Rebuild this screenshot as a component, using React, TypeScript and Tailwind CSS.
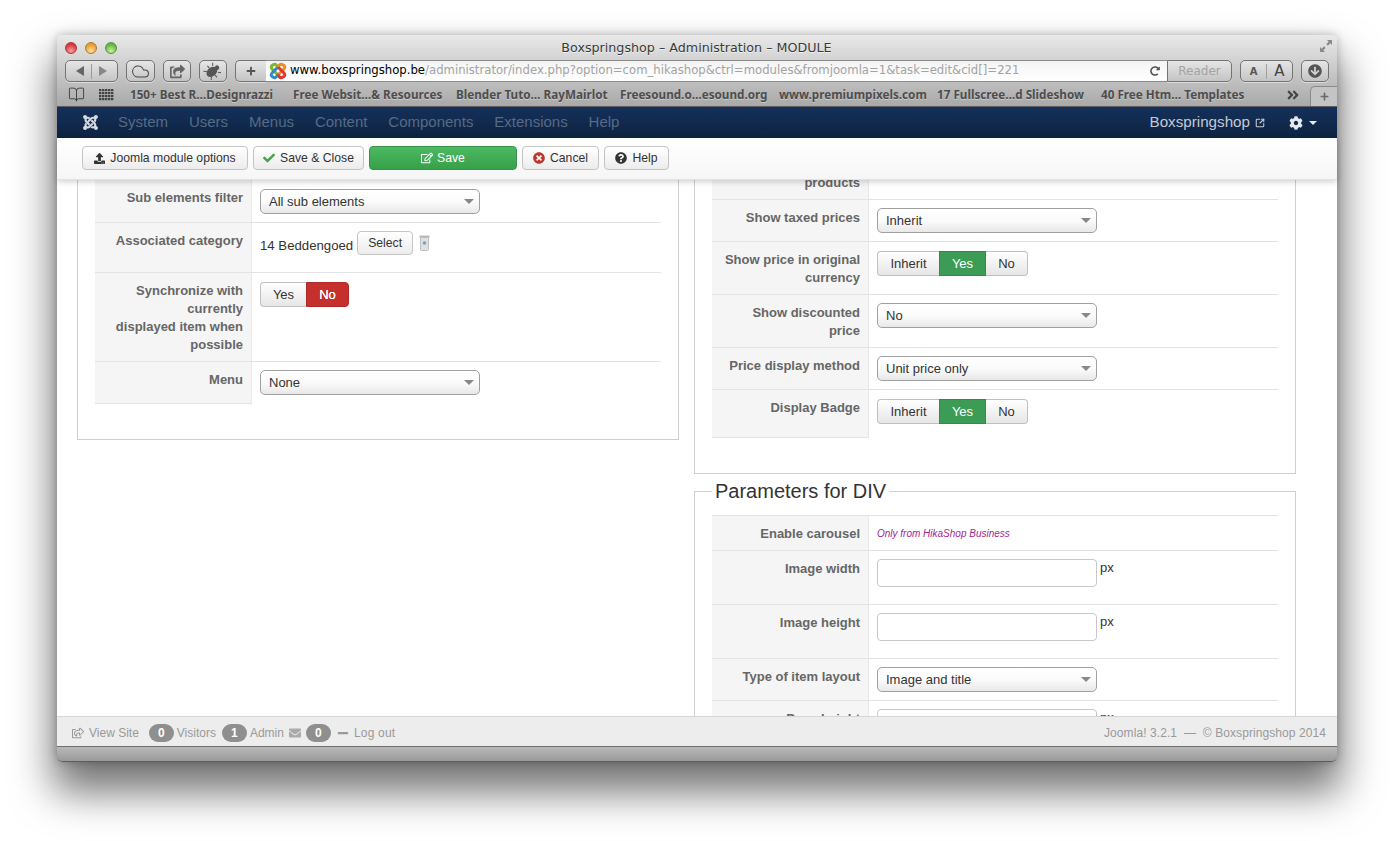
import type { ReactNode } from "react";
import {
  FaAngleDoubleRight, FaArrowCircleDown, FaCheck, FaCog, FaEnvelope, FaJoomla, FaMinus, FaPlus, FaQuestionCircle, FaRedoAlt,
  FaRegEdit, FaRegShareSquare, FaShareSquare, FaTimesCircle, FaUpload,
} from "react-icons/fa";
import { BookOpen, Cloud, SquareArrowOutUpRight } from "lucide-react";

const BOOKMARKS = [
  { t: "150+ Best R…Designrazzi", w: "w-[163px]" },
  { t: "Free Websit…& Resources", w: "w-[163px]" },
  { t: "Blender Tuto… RayMairlot", w: "w-[164px]" },
  { t: "Freesound.o…esound.org", w: "w-[159px]" },
  { t: "www.premiumpixels.com", w: "w-[158px]" },
  { t: "17 Fullscree…d Slideshow", w: "w-[164px]" },
  { t: "40 Free Htm… Templates", w: "w-[185px]" },
];
const NAV = ["System", "Users", "Menus", "Content", "Components", "Extensions", "Help"];

const chromeBtn = "h-[22px] flex items-center justify-center rounded-[5px] border border-[#747474] bg-gradient-to-b from-[#e6e6e6] to-[#c4c4c4] text-[#555] shadow-[0_1px_0_rgba(255,255,255,0.45)]";
const jBtn = "h-6 flex items-center justify-center gap-[5px] rounded-[4px] border border-[#c4c4c4] bg-gradient-to-b from-white to-[#ececec] text-[12.2px] text-[#333]";

function Caret() {
  return <span className="w-0 h-0 border-x-[5px] border-x-transparent border-t-[5px] border-t-[#888]" />;
}

function Select({ value }: { value: string }) {
  return (
    <div className="w-[220px] h-[25px] flex items-center justify-between pl-2 pr-[5px] rounded-[5px] border border-[#a0a0a0] bg-gradient-to-b from-white via-[#fbfbfb] to-[#e8e8e8] text-[13px] text-[#333]">
      {value}
      <Caret />
    </div>
  );
}

function Toggle({ inherit, yes, red }: { inherit?: boolean; yes?: boolean; red?: boolean }) {
  const off = "h-[25px] flex items-center justify-center border border-[#c0c0c0] bg-gradient-to-b from-white to-[#e6e6e6] text-[13px] text-[#333]";
  return (
    <div className="flex">
      {inherit && <div className={`${off} w-[62px] rounded-l-[4px] border-r-0`}>Inherit</div>}
      {yes ? (
        <div className="h-[25px] w-[47px] flex items-center justify-center bg-[#3c9c56] border border-[#36894c] text-[13px] text-white">Yes</div>
      ) : (
        <div className={`${off} w-[46px] rounded-l-[4px] border-r-0`}>Yes</div>
      )}
      {red ? (
        <div className="h-[25px] w-[43px] flex items-center justify-center rounded-r-[4px] bg-[#c5302e] border border-[#ad2a28] text-[13px] text-white [text-shadow:0_0_0.6px_#fff]">No</div>
      ) : (
        <div className={`${off} w-[42px] rounded-r-[4px] border-l-0`}>No</div>
      )}
    </div>
  );
}

function Row({ label, h, pt = "pt-[9px]", last, children }: { label: ReactNode; h: string; pt?: string; last?: boolean; children?: ReactNode }) {
  return (
    <div className={`flex shrink-0 ${h} ${last ? "" : "border-b border-[#e3e3e3]"}`}>
      <div className={`w-[157px] shrink-0 bg-[#f5f5f5] border-r border-[#e8e8e8] pr-2 ${pt} text-right text-[13px] leading-[18px] font-bold text-[#666] ${last ? "border-b border-b-[#e3e3e3]" : ""}`}>
        {label}
      </div>
      <div className="flex-1 pl-2 pt-2">{children}</div>
    </div>
  );
}

function Favicon() {
  return (
    <svg width="18" height="18" viewBox="0 0 18 18" fill="none" strokeWidth="3" strokeLinecap="round" className="shrink-0">
      <path d="M3 7 L8 12 M3 7 Q1 4 4 3 Q6 1 8 4" stroke="#7ab929" />
      <path d="M15 7 L10 12 M9 5 Q11 1 14 3 Q17 4 15 7" stroke="#f08a24" />
      <path d="M15 11 L10 6 M9 13 Q11 17 14 15 Q17 14 15 11" stroke="#e5342b" />
      <path d="M3 11 L8 6 M3 11 Q1 14 4 15 Q6 17 8 14" stroke="#2d8ac4" />
    </svg>
  );
}

function Beetle() {
  return (
    <svg width="20" height="18" viewBox="0 0 20 18" fill="none" className="text-[#555]">
      <g transform="rotate(50 10 9)">
        <ellipse cx="10" cy="10.5" rx="4.4" ry="6" fill="currentColor" />
        <ellipse cx="10" cy="3.6" rx="2.4" ry="2" fill="currentColor" />
        <path d="M6 6 L3.5 4 M5.5 10 L2.5 10 M6.5 14 L4 16.5 M14 6 L16.5 4 M14.5 10 L17.5 10 M13.5 14 L16 16.5" stroke="currentColor" strokeWidth="1" />
      </g>
    </svg>
  );
}

function BrowserChrome() {
  return (
    <div className="h-[72px] shrink-0 flex flex-col rounded-t-[5px] bg-gradient-to-b from-[#e9e9e9] via-[#c9c9c9] to-[#a9a9a9] border-b border-[#5e5e5e] font-['DejaVu_Sans',sans-serif]">
      {/* title row */}
      <div className="h-[25px] shrink-0 flex items-center pl-2 pr-1">
        <div className="flex gap-2">
          <span className="w-3 h-3 rounded-full border border-[#a83a3a] bg-[radial-gradient(circle_at_50%_80%,#f7a0a0,#d8343a_70%)]" />
          <span className="w-3 h-3 rounded-full border border-[#b07d2c] bg-[radial-gradient(circle_at_50%_80%,#fde0a0,#e59a30_70%)]" />
          <span className="w-3 h-3 rounded-full border border-[#5c9440] bg-[radial-gradient(circle_at_50%_80%,#c8f0a0,#5db544_70%)]" />
        </div>
        <div className="flex-1 text-center text-[12.7px] text-[#3a3a3a] pr-[43px] [text-shadow:0_1px_0_rgba(255,255,255,0.6)]">
          Boxspringshop – Administration – MODULE
        </div>
        <svg width="14" height="14" viewBox="0 0 14 14" className="text-[#8a8a8a] -mt-1">
          <path d="M8 1h5v5l-1.7-1.7-2.4 2.4-1.6-1.6 2.4-2.4zM6 13H1V8l1.7 1.7 2.4-2.4 1.6 1.6-2.4 2.4z" fill="currentColor" />
        </svg>
      </div>
      {/* toolbar row */}
      <div className="h-[22px] shrink-0 flex items-center pl-2">
        <div className={`${chromeBtn} w-[53px]`}>
          <span className="w-0 h-0 border-y-[5px] border-y-transparent border-r-[8px] border-r-[#666] mr-[7px]" />
          <span className="w-px h-[15px] bg-[#9a9a9a] mr-[7px]" />
          <span className="w-0 h-0 border-y-[5px] border-y-transparent border-l-[8px] border-l-[#888]" />
        </div>
        <div className={`${chromeBtn} w-[29px] ml-2`}><Cloud size={19} strokeWidth={1.3} className="text-[#444]" /></div>
        <div className={`${chromeBtn} w-[28px] ml-2`}><FaShareSquare size={15} className="text-[#666]" /></div>
        <div className={`${chromeBtn} w-[28px] ml-2`}><Beetle /></div>
        <div className={`${chromeBtn} w-[31px] ml-2 rounded-r-none border-r-0 text-[#333]`}><FaPlus size={10} /></div>
        <div className="w-[901px] h-[22px] flex items-center gap-[3px] pl-[3px] pr-[7px] bg-gradient-to-b from-[#f4f4f4] to-white border-y border-[#8a8a8a] text-[11.68px] whitespace-nowrap overflow-hidden">
          <Favicon />
          <div className="flex-1 min-w-0 overflow-hidden">
            <span className="text-black">www.boxspringshop.be</span>
            <span className="text-[#a3a3a3]">/administrator/index.php?option=com_hikashop&amp;ctrl=modules&amp;fromjoomla=1&amp;task=edit&amp;cid[]=221</span>
          </div>
          <FaRedoAlt size={10} className="text-[#555] shrink-0" />
        </div>
        <div className={`${chromeBtn} w-[65px] rounded-l-none text-[12px] !text-[#a4a4a4]`}>Reader</div>
        <div className={`${chromeBtn} w-[53px] ml-2`}>
          <span className="w-[26px] text-center text-[10px] font-bold text-[#555]">A</span>
          <span className="w-px h-[15px] bg-[#a0a0a0]" />
          <span className="w-[26px] text-center text-[15px] font-normal text-[#444]">A</span>
        </div>
        <div className={`${chromeBtn} w-[28px] ml-2`}><FaArrowCircleDown size={14} className="text-[#555]" /></div>
      </div>
      {/* bookmarks row */}
      <div className="flex-1 flex items-center pl-[11px] pt-[1px]">
        <BookOpen size={17} strokeWidth={1.2} className="text-[#333]" />
        <svg width="16" height="12" viewBox="0 0 16 12" className="ml-[14px] text-[#444]">
          {[0, 3, 6, 9].map((y) =>
            [0, 3, 6, 9, 12].map((x) => <rect key={`${x}-${y}`} x={x} y={y} width="2.4" height="2.2" fill="currentColor" />)
          )}
        </svg>
        <div className="flex ml-[15px] text-[11.7px] font-bold font-['Noto_Sans',sans-serif] text-[#4d4d4d] whitespace-nowrap [text-shadow:0_1px_0_rgba(255,255,255,0.35)]">
          {BOOKMARKS.map((b) => <span key={b.t} className={b.w}>{b.t}</span>)}
        </div>
        <FaAngleDoubleRight size={14} className="text-[#444]" />
        <div className="ml-auto h-5 w-[27px] mt-[2px] flex items-center justify-center rounded-tl-[5px] border-l border-t border-[#8a8a8a] bg-[#c4c4c4] text-[#6a6a6a]">
          <FaPlus size={9} />
        </div>
      </div>
    </div>
  );
}

function AdminNav() {
  return (
    <div className="h-[31px] shrink-0 flex items-center bg-gradient-to-b from-[#14305a] to-[#0e2342] text-[15px] text-[#566b85]">
      <FaJoomla size={17} className="ml-[25px] mr-[19px] text-[#d5dbe3]" />
      <div className="flex gap-[20.9px]">
        {NAV.map((n) => <span key={n}>{n}</span>)}
      </div>
      <span className="ml-auto text-[15.2px] text-[#c3cad4]">Boxspringshop</span>
      <SquareArrowOutUpRight size={10} strokeWidth={2.6} className="ml-[5px] text-[#c3cad4]" />
      <FaCog size={14} className="ml-[24px] text-[#e6e9ee]" />
      <span className="ml-[6px] mr-[20px] w-0 h-0 border-x-[4px] border-x-transparent border-t-[4px] border-t-[#e6e9ee]" />
    </div>
  );
}

function ActionBar() {
  return (
    <div className="relative z-10 h-[42px] shrink-0 flex items-center gap-[5px] pl-[25px] pb-[1px] bg-gradient-to-b from-white to-[#f6f6f6] border-b border-[#e2e2e2] shadow-[0_2px_6px_rgba(0,0,0,0.18)]">
      <div className={`${jBtn} w-[166px]`}><FaUpload size={11} />Joomla module options</div>
      <div className={`${jBtn} w-[111px]`}><FaCheck size={12} className="text-[#46a546]" />Save &amp; Close</div>
      <div className="h-6 w-[148px] flex items-center justify-center gap-[4px] rounded-[4px] border border-[#359247] bg-gradient-to-b from-[#4cb963] to-[#37a049] text-[12.2px] text-white">
        <FaRegEdit size={12} />Save
      </div>
      <div className={`${jBtn} w-[77px]`}><FaTimesCircle size={12} className="text-[#bd362f]" />Cancel</div>
      <div className={`${jBtn} w-[65px]`}><FaQuestionCircle size={12} className="text-[#333]" />Help</div>
    </div>
  );
}

function LeftColumn() {
  return (
    <div className="w-[602px] h-[260px] shrink-0 border-x border-b border-[#cfcfcf] pl-[17px] pr-[17px] flex flex-col">
      <Row label="Sub elements filter" h="h-[43px]" pt="pt-[9px]"><div className="pt-px"><Select value="All sub elements" /></div></Row>
      <Row label="Associated category" h="h-[50px]">
        <div className="flex items-center gap-[4px] text-[13.2px] text-[#333]">
          <span className="pt-[5px]">14 Beddengoed</span>
          <div className={`${jBtn} w-[56px]`}>Select</div>
          <svg width="11" height="16" viewBox="0 0 11 16" className="ml-[2px]">
            <rect x="1.5" y="2.5" width="8" height="13" rx="1" fill="#dfe2e5" stroke="#c0c0c0" />
            <rect x="0.5" y="0.5" width="10" height="2.5" fill="#b8bcbf" />
            <circle cx="5.5" cy="8" r="1.8" fill="#7f9fc0" />
          </svg>
        </div>
      </Row>
      <Row label={<>Synchronize with<br />currently<br />displayed item when<br />possible</>} h="h-[89px]">
        <div className="pt-px"><Toggle red /></div>
      </Row>
      <Row label="Menu" h="h-[42px]" last><Select value="None" /></Row>
    </div>
  );
}

function RightColumn() {
  return (
    <div className="w-[602px] shrink-0 flex flex-col">
      <div className="h-[294px] shrink-0 border-x border-b border-[#cfcfcf] pl-[17px] pr-[17px] flex flex-col">
        <div className="flex shrink-0 h-[20px] border-b border-[#e3e3e3] overflow-hidden">
          <div className="w-[157px] shrink-0 h-[19px] bg-[#f5f5f5] border-r border-[#e8e8e8] pr-2 text-right text-[13px] leading-[6px] font-bold text-[#666]">products</div>
        </div>
        <Row label="Show taxed prices" h="h-[42px]"><Select value="Inherit" /></Row>
        <Row label={<>Show price in original<br />currency</>} h="h-[53px]"><div className="pt-px"><Toggle inherit yes /></div></Row>
        <Row label={<>Show discounted<br />price</>} h="h-[53px]"><Select value="No" /></Row>
        <Row label="Price display method" h="h-[42px]"><Select value="Unit price only" /></Row>
        <Row label="Display Badge" h="h-[48px]" last><div className="pt-px"><Toggle inherit yes /></div></Row>
      </div>
      <fieldset className="mt-[5px] border border-[#cfcfcf] pl-[17px] pr-[17px]">
        <legend className="px-[3px] text-[20px] leading-6 text-[#333]">Parameters for DIV</legend>
        <div className="mt-3 border-t border-[#e3e3e3] flex flex-col">
          <Row label="Enable carousel" h="h-[35px]">
            <div className="text-[10px] italic leading-[20px] text-[#a5258f]">Only from HikaShop Business</div>
          </Row>
          <Row label="Image width" h="h-[54px]"><Input /></Row>
          <Row label="Image height" h="h-[54px]"><Input /></Row>
          <Row label="Type of item layout" h="h-[42px]"><Select value="Image and title" /></Row>
          <Row label="Pane height" h="h-[54px]"><Input /></Row>
        </div>
      </fieldset>
    </div>
  );
}

function Input() {
  return (
    <div className="flex items-start gap-[3px] text-[13px] leading-[18px] text-[#333]">
      <div className="w-[220px] h-[28px] rounded-[4px] border border-[#c8c8c8] bg-white" />
      px
    </div>
  );
}

function Badge({ n }: { n: number }) {
  return <span className="w-[25px] h-[18px] flex items-center justify-center rounded-[9px] bg-[#8f8f8f] text-[12px] font-bold text-white">{n}</span>;
}

function StatusBar() {
  return (
    <div className="relative z-10 h-[30px] shrink-0 flex items-center pl-[15px] pr-[11px] pt-[2px] bg-[#ededed] border-t border-[#d6d6d6] text-[12px] text-[#999]">
      <FaRegShareSquare size={12} />
      <span className="ml-[5px]">View Site</span>
      <span className="ml-[10px]"><Badge n={0} /></span>
      <span className="ml-[3px]">Visitors</span>
      <span className="ml-[6px]"><Badge n={1} /></span>
      <span className="ml-[3px]">Admin</span>
      <FaEnvelope size={12} className="ml-[5px] text-[#aaa]" />
      <span className="ml-[5px]"><Badge n={0} /></span>
      <FaMinus size={12} className="ml-[6px]" />
      <span className="ml-[5px] tracking-[0.2px]">Log out</span>
      <span className="ml-auto tracking-[0.08px]">Joomla! 3.2.1 &nbsp;—&nbsp; © Boxspringshop 2014</span>
    </div>
  );
}

export default function App() {
  return (
    <div className="w-[1394px] h-[841px] overflow-hidden bg-white pt-[35px] pl-[57px] font-['Liberation_Sans',Arial,sans-serif]">
      <div className="w-[1280px] h-[727px] flex flex-col rounded-[5px] bg-white shadow-[0_26px_40px_4px_rgba(0,0,0,0.55),0_0_10px_rgba(0,0,0,0.25)]">
        <BrowserChrome />
        <AdminNav />
        <ActionBar />
        <div className="h-[536px] shrink-0 flex gap-[15px] pl-5 overflow-hidden bg-white">
          <LeftColumn />
          <RightColumn />
        </div>
        <StatusBar />
        <div className="h-[16px] shrink-0 rounded-b-[5px] bg-gradient-to-b from-[#b8b8b8] to-[#9a9a9a] border-t border-[#707070] border-b border-b-[#5c5c5c]" />
      </div>
    </div>
  );
}
